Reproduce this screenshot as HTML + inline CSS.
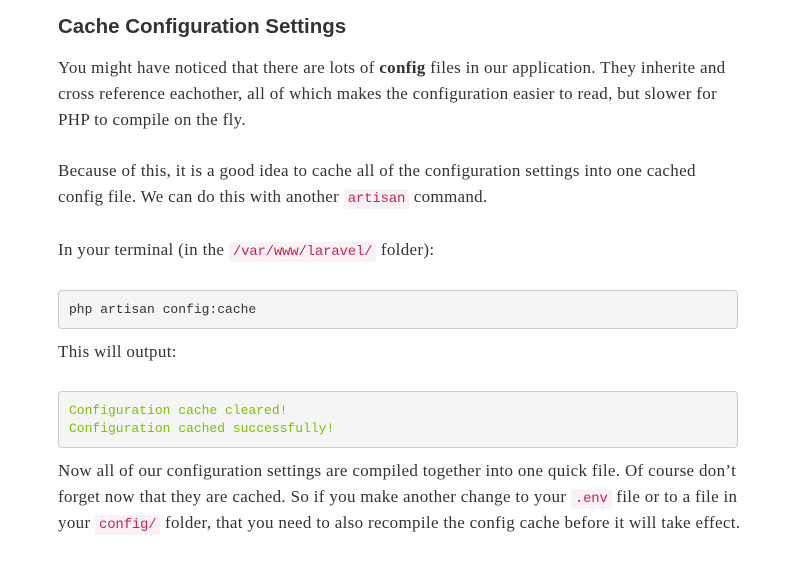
<!DOCTYPE html>
<html><head><meta charset="utf-8"><style>
body{margin:0;background:#fff;width:800px;height:563px;position:relative;overflow:hidden;color:#333;}
.l{position:absolute;left:58px;white-space:nowrap;font-family:"Liberation Serif",serif;font-size:17px;line-height:26px;color:#333;letter-spacing:0.32px;}
h2{position:absolute;left:58px;top:15px;margin:0;font-family:"Liberation Sans",sans-serif;font-weight:bold;font-size:20.5px;color:#333;}
code{font-family:"Liberation Mono",monospace;font-size:14px;color:#c7254e;background:#f9f2f4;padding:2px 4px;border-radius:3px;letter-spacing:-0.2px;}
.pre{position:absolute;left:58px;width:680px;background:#f5f5f5;border:1px solid #ccc;border-radius:4px;font-family:"Liberation Mono",monospace;font-size:13px;line-height:18px;box-sizing:border-box;padding:0 10px;}
</style></head><body>
<h2>Cache Configuration Settings</h2>
<div class="l" style="top:55px">You might have noticed that there are lots of <b>config</b> files in our application. They inherite and</div>
<div class="l" style="top:81px">cross reference eachother, all of which makes the configuration easier to read, but slower for</div>
<div class="l" style="top:107px">PHP to compile on the fly.</div>
<div class="l" style="top:158px">Because of this, it is a good idea to cache all of the configuration settings into one cached</div>
<div class="l" style="top:184px">config file. We can do this with another <code>artisan</code> command.</div>
<div class="l" style="top:237px">In your terminal (in the <code>/var/www/laravel/</code> folder):</div>
<div class="pre" style="top:290px;height:39px;padding-top:10px;color:#333">php artisan config:cache</div>
<div class="l" style="top:339px">This will output:</div>
<div class="pre" style="top:391px;height:57px;padding-top:10px;color:#80c000">Configuration cache cleared!<br>Configuration cached successfully!</div>
<div class="l" style="top:458px">Now all of our configuration settings are compiled together into one quick file. Of course don’t</div>
<div class="l" style="top:484px">forget now that they are cached. So if you make another change to your <code>.env</code> file or to a file in</div>
<div class="l" style="top:510px">your <code>config/</code> folder, that you need to also recompile the config cache before it will take effect.</div>
</body></html>
